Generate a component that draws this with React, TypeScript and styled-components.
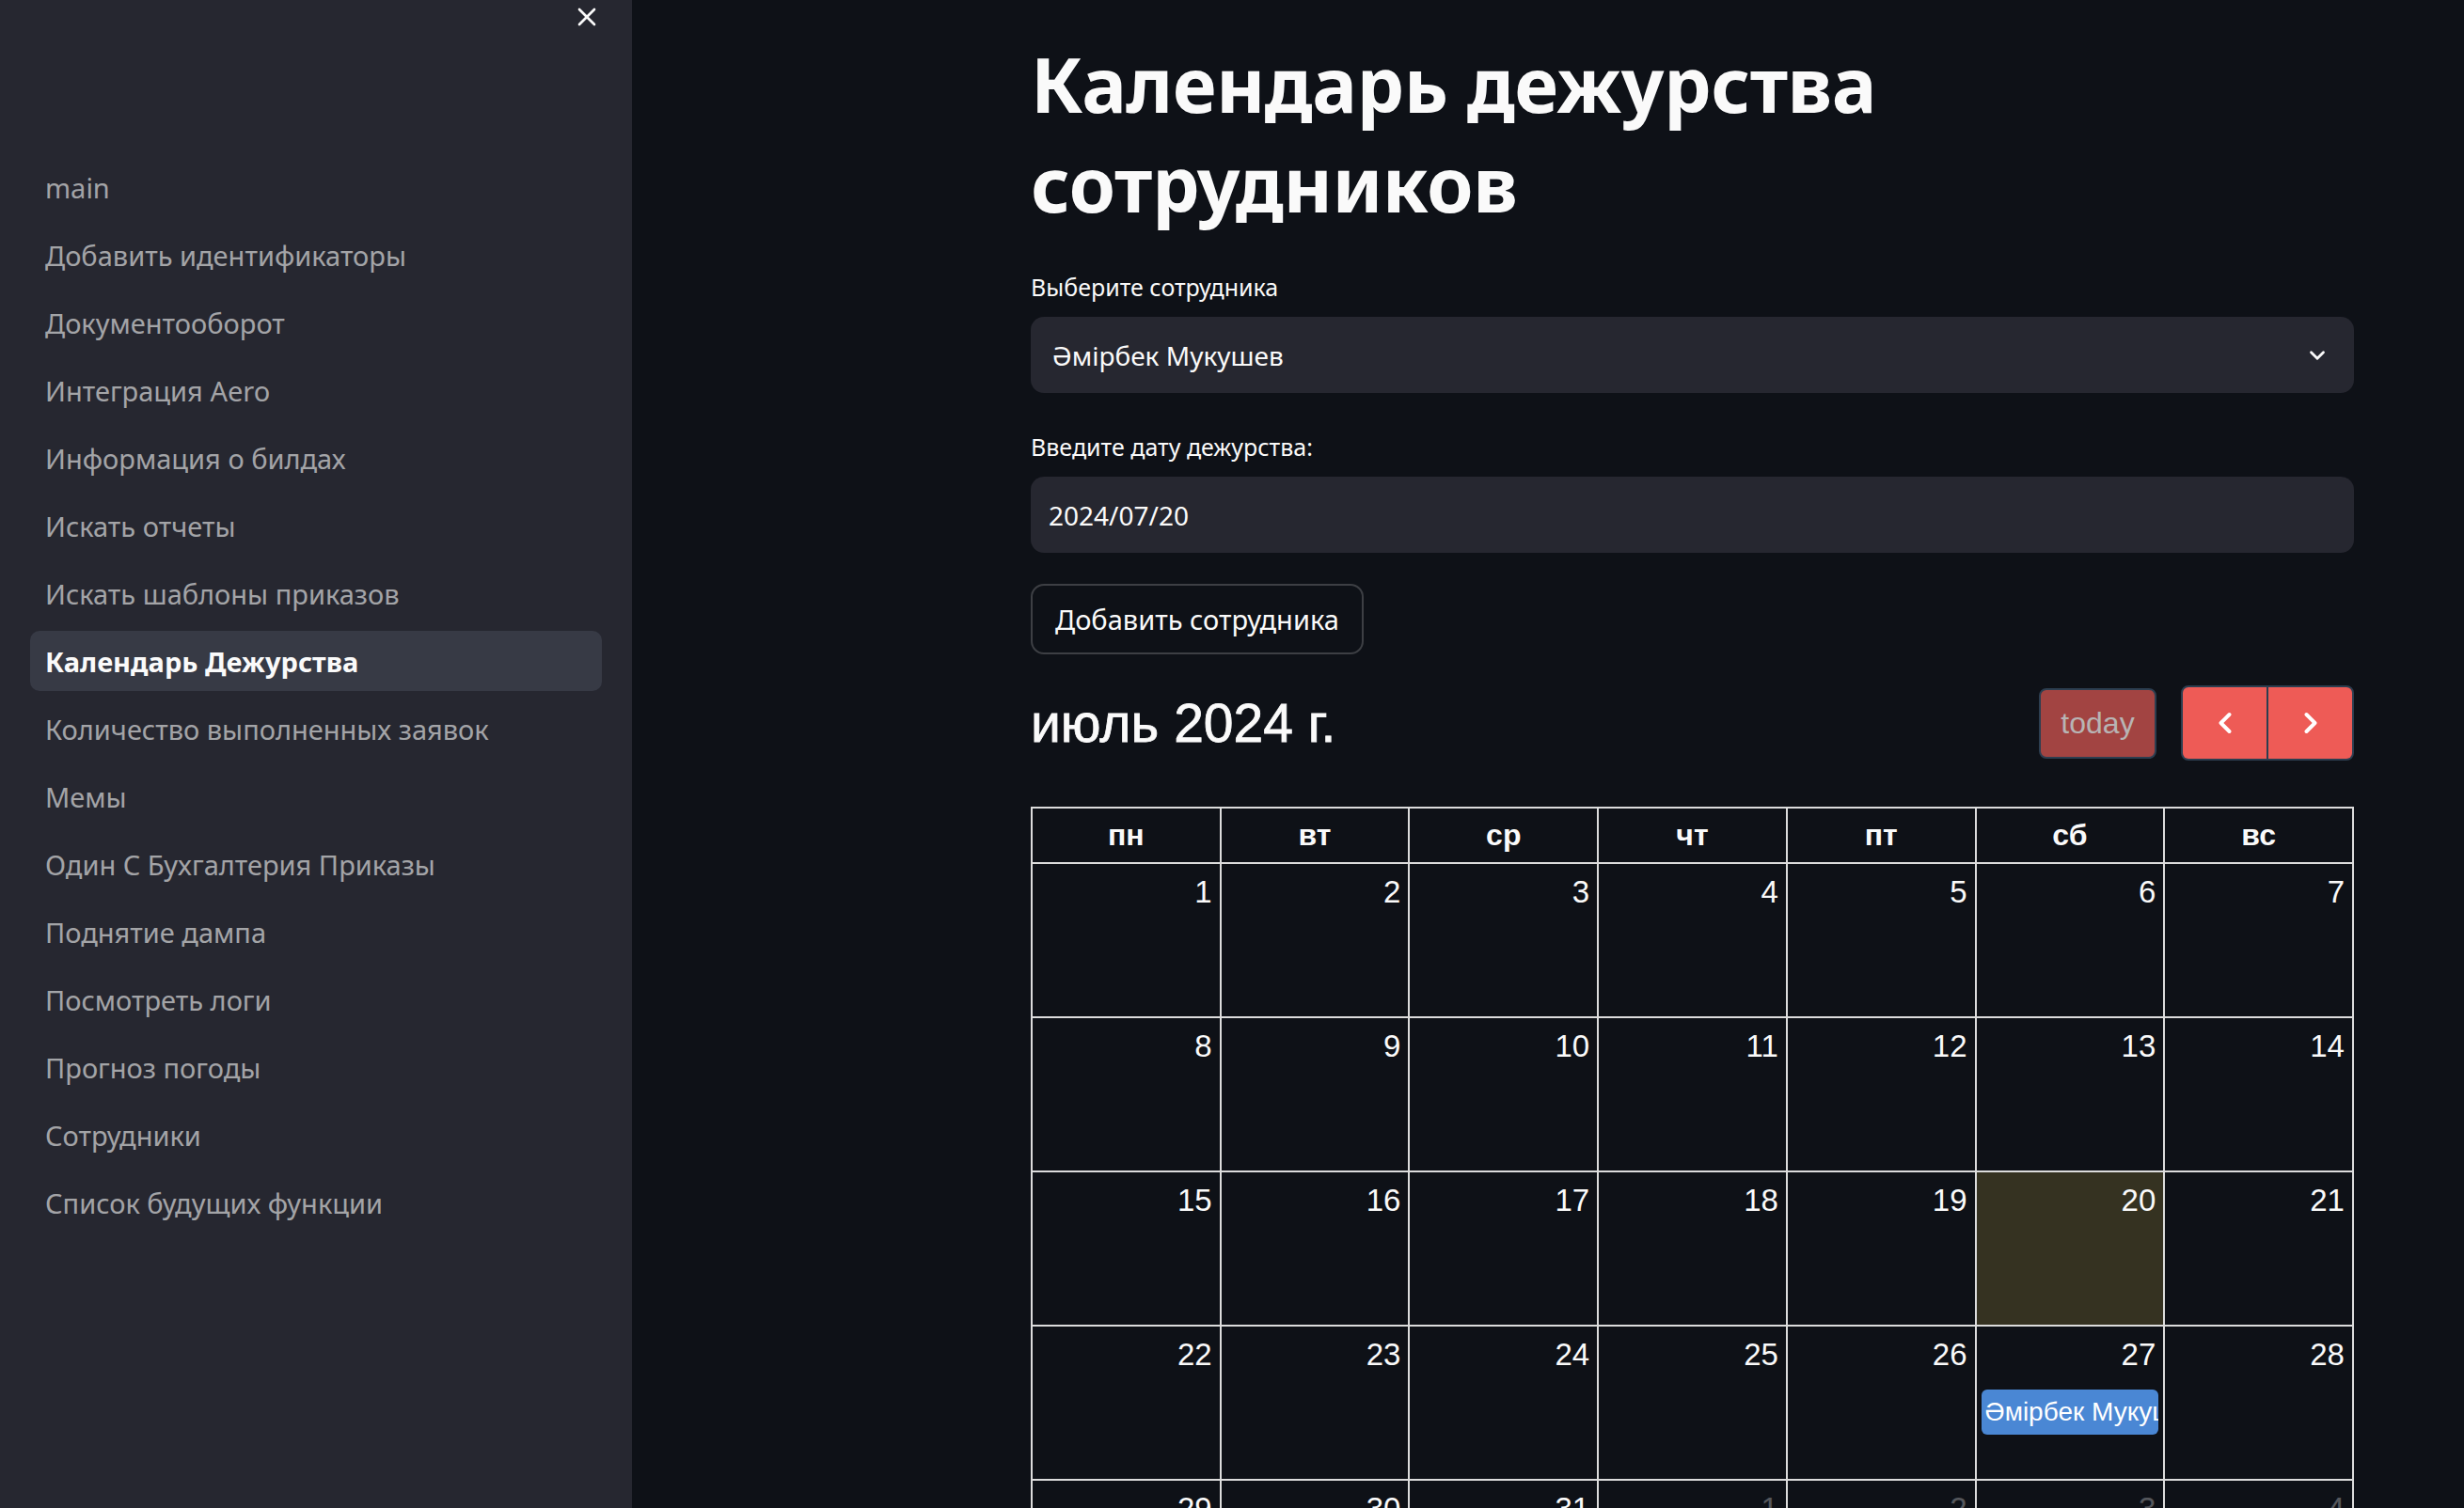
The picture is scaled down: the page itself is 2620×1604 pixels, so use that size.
import { FC } from "react";
import styled, { createGlobalStyle } from "styled-components";
import { X, ChevronDown, ChevronLeft, ChevronRight } from "lucide-react";

const GlobalStyle = createGlobalStyle`
  html, body {
    margin: 0;
    padding: 0;
    background: #0e1117;
    overflow: hidden;
  }
  * {
    box-sizing: border-box;
  }
`;

const navItems = [
  "main",
  "Добавить идентификаторы",
  "Документооборот",
  "Интеграция Aero",
  "Информация о билдах",
  "Искать отчеты",
  "Искать шаблоны приказов",
  "Календарь Дежурства",
  "Количество выполненных заявок",
  "Мемы",
  "Один С Бухгалтерия Приказы",
  "Поднятие дампа",
  "Посмотреть логи",
  "Прогноз погоды",
  "Сотрудники",
  "Список будущих функции",
];

const ACTIVE = "Календарь Дежурства";

const weekDays = ["пн", "вт", "ср", "чт", "пт", "сб", "вс"];

type Day = { n: number; other?: boolean; today?: boolean; event?: string };

const weeks: Day[][] = [
  [1, 2, 3, 4, 5, 6, 7].map((n) => ({ n })),
  [8, 9, 10, 11, 12, 13, 14].map((n) => ({ n })),
  [15, 16, 17, 18, 19, 20, 21].map((n) => ({ n, today: n === 20 })),
  [22, 23, 24, 25, 26, 27, 28].map((n) => ({
    n,
    event: n === 27 ? "Әмірбек Мукушев" : undefined,
  })),
  [
    { n: 29 },
    { n: 30 },
    { n: 31 },
    { n: 1, other: true },
    { n: 2, other: true },
    { n: 3, other: true },
    { n: 4, other: true },
  ],
];

const App: FC = () => {
  return (
    <Page>
      <GlobalStyle />
      <Sidebar>
        <SidebarHeader>
          <CloseButton>
            <X size={32} strokeWidth={2} />
          </CloseButton>
        </SidebarHeader>
        <Nav>
          {navItems.map((item) => (
            <NavLink key={item} $active={item === ACTIVE}>
              {item}
            </NavLink>
          ))}
        </Nav>
      </Sidebar>

      <Main>
        <Content>
          <Title>
            Календарь дежурства
            <br />
            сотрудников
          </Title>

          <Label>Выберите сотрудника</Label>
          <SelectBox>
            <span>Әмірбек Мукушев</span>
            <ChevronDown size={26} strokeWidth={2.6} />
          </SelectBox>

          <Label>Введите дату дежурства:</Label>
          <InputBox>2024/07/20</InputBox>

          <GhostButton>Добавить сотрудника</GhostButton>

          <Calendar>
            <Toolbar>
              <MonthTitle>июль 2024 г.</MonthTitle>
              <ToolbarRight>
                <TodayButton>today</TodayButton>
                <NavGroup>
                  <NavButton>
                    <ChevronLeft size={36} strokeWidth={2.6} />
                  </NavButton>
                  <NavButton>
                    <ChevronRight size={36} strokeWidth={2.6} />
                  </NavButton>
                </NavGroup>
              </ToolbarRight>
            </Toolbar>

            <Grid>
              {weekDays.map((d) => (
                <HeadCell key={d}>{d}</HeadCell>
              ))}
              {weeks.flat().map((day, i) => (
                <DayCell key={i} $today={day.today}>
                  <DayNumber $other={day.other}>{day.n}</DayNumber>
                  {day.event && <Event>{day.event}</Event>}
                </DayCell>
              ))}
            </Grid>
          </Calendar>
        </Content>
      </Main>
    </Page>
  );
};

const Page = styled.div`
  display: flex;
  width: 2620px;
  height: 1604px;
  overflow: hidden;
  background: #0e1117;
`;

const Sidebar = styled.aside`
  width: 672px;
  flex-shrink: 0;
  background: #262730;
  display: flex;
  flex-direction: column;
`;

const SidebarHeader = styled.div`
  height: 167px;
  display: flex;
  justify-content: flex-end;
  align-items: flex-start;
  padding: 2px 32px 0 0;
`;

const CloseButton = styled.button`
  background: none;
  border: none;
  padding: 0;
  color: #fafafa;
  display: flex;
  cursor: pointer;
`;

const Nav = styled.nav`
  display: flex;
  flex-direction: column;
  gap: 8px;
  padding: 0 32px;
`;

const NavLink = styled.a<{ $active?: boolean }>`
  display: flex;
  align-items: center;
  height: 64px;
  padding: 0 16px;
  border-radius: 10px;
  font-family: "Noto Sans", sans-serif;
  font-size: 29px;
  font-weight: ${(p) => (p.$active ? 700 : 400)};
  color: ${(p) => (p.$active ? "#fafafa" : "rgba(250, 250, 250, 0.6)")};
  background: ${(p) => (p.$active ? "rgba(151, 166, 195, 0.15)" : "transparent")};
  white-space: nowrap;
`;

const Main = styled.main`
  flex: 1;
  padding-left: 424px;
`;

const Content = styled.div`
  width: 1407px;
  display: flex;
  flex-direction: column;
  font-family: "Noto Sans", sans-serif;
  color: #fafafa;
`;

const Title = styled.h1`
  margin: 0;
  padding-top: 36px;
  font-size: 80px;
  line-height: 106px;
  font-weight: 700;
  letter-spacing: -0.5px;
`;

const Label = styled.label`
  margin-top: 39px;
  font-size: 25px;
  line-height: 36px;
  color: #fafafa;
`;

const SelectBox = styled.div`
  margin-top: 14px;
  height: 81px;
  border-radius: 14px;
  background: #262730;
  display: flex;
  align-items: center;
  justify-content: space-between;
  padding: 0 26px 0 23px;
  font-size: 28px;
`;

const InputBox = styled.div`
  margin-top: 14px;
  height: 81px;
  border-radius: 14px;
  background: #262730;
  display: flex;
  align-items: center;
  padding: 0 19px;
  font-size: 28px;
`;

const GhostButton = styled.button`
  margin-top: 33px;
  align-self: flex-start;
  height: 75px;
  padding: 0 24px;
  border-radius: 14px;
  border: 2px solid rgba(250, 250, 250, 0.2);
  background: transparent;
  color: #fafafa;
  font-family: "Noto Sans", sans-serif;
  font-size: 29px;
`;

const Calendar = styled.section`
  margin-top: 33px;
  font-family: "Liberation Sans", Arial, sans-serif;
  font-size: 33px;
  color: #fafafa;
`;

const Toolbar = styled.div`
  display: flex;
  align-items: center;
  justify-content: space-between;
  height: 80px;
  margin-bottom: 49px;
`;

const MonthTitle = styled.h2`
  margin: 0;
  font-size: 57px;
  font-weight: 400;
  line-height: 1.2;
  -webkit-text-stroke: 0.8px #fafafa;
`;

const ToolbarRight = styled.div`
  display: flex;
  align-items: center;
  gap: 26px;
`;

const TodayButton = styled.button`
  width: 125px;
  height: 75px;
  border: 2px solid #2c3e50;
  border-radius: 8px;
  background: #a24442;
  color: #b8b4b4;
  font-family: "Liberation Sans", Arial, sans-serif;
  font-size: 32px;
  padding: 0;
`;

const NavGroup = styled.div`
  display: flex;
  height: 80px;
  border: 2px solid #2c3e50;
  border-radius: 8px;
  overflow: hidden;
  background: #2c3e50;
  gap: 2px;
`;

const NavButton = styled.button`
  width: 89px;
  border: none;
  background: #ee5b56;
  color: #ffffff;
  display: flex;
  align-items: center;
  justify-content: center;
  padding: 0;
`;

const Grid = styled.div`
  display: grid;
  grid-template-columns: repeat(7, 1fr);
  grid-template-rows: 59px repeat(5, 164px);
  border-top: 2px solid #dcdcdc;
  border-left: 2px solid #dcdcdc;
`;

const HeadCell = styled.div`
  display: flex;
  align-items: center;
  justify-content: center;
  border-right: 2px solid #dcdcdc;
  border-bottom: 2px solid #dcdcdc;
  font-weight: 700;
  font-size: 32px;
`;

const DayCell = styled.div<{ $today?: boolean }>`
  display: flex;
  flex-direction: column;
  align-items: stretch;
  border-right: 2px solid #dcdcdc;
  border-bottom: 2px solid #dcdcdc;
  background: ${(p) => (p.$today ? "#353221" : "transparent")};
  overflow: hidden;
`;

const DayNumber = styled.div<{ $other?: boolean }>`
  align-self: flex-end;
  padding: 10px 8px 0 0;
  line-height: 1.2;
  opacity: ${(p) => (p.$other ? 0.3 : 1)};
`;

const Event = styled.div`
  margin: 17px 5px 0 5px;
  height: 48px;
  border-radius: 6px;
  background: #4a87d4;
  color: #ffffff;
  font-size: 28px;
  line-height: 48px;
  padding-left: 4px;
  white-space: nowrap;
  overflow: hidden;
`;

export default App;
